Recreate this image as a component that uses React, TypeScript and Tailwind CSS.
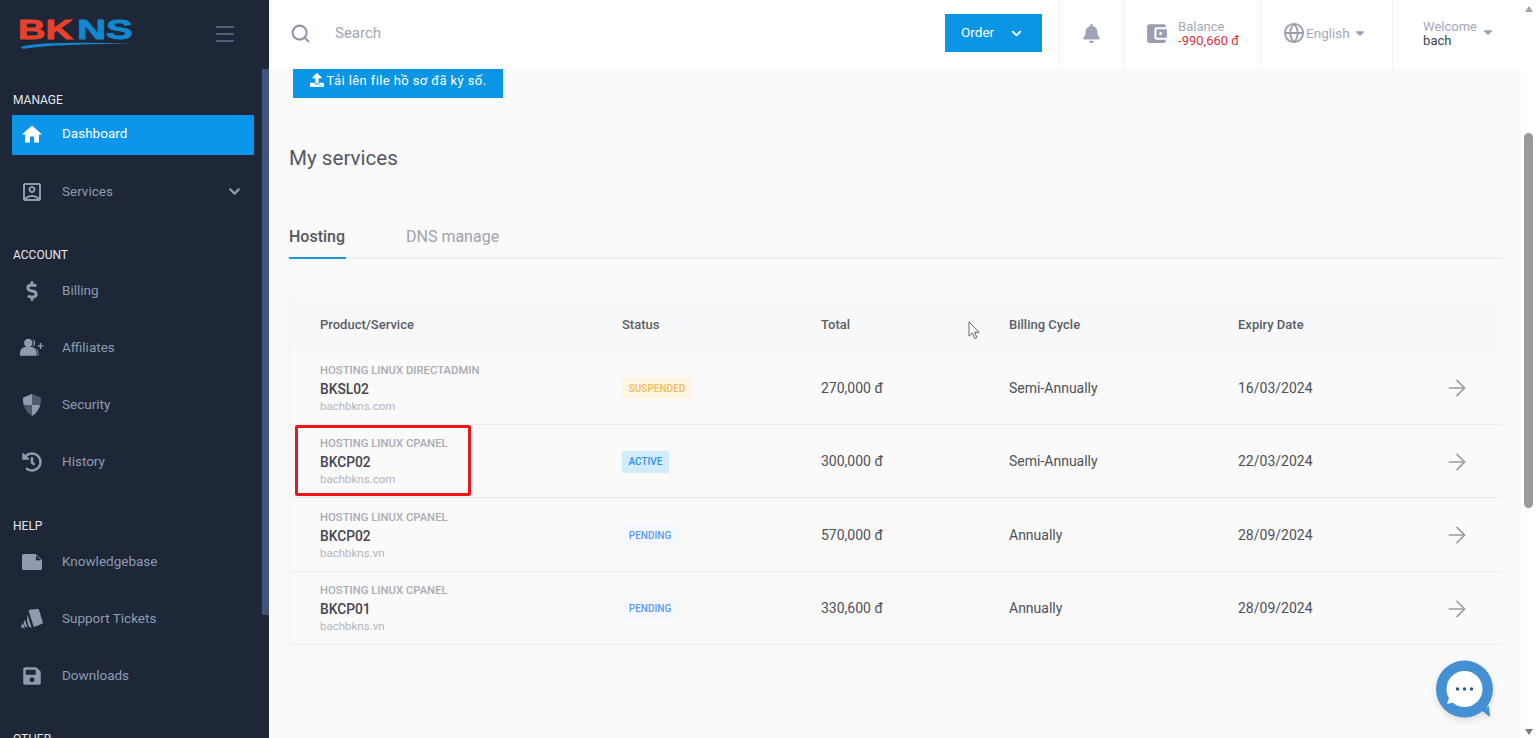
import React from "react";
import { FaDollarSign, FaHistory, FaBell, FaSave, FaCaretDown, FaUpload } from "react-icons/fa";
import { MdAccountBalanceWallet, MdHome, MdOutlineAccountBox } from "react-icons/md";
import { ChevronDown, Search, Menu, ArrowRight, Globe } from "lucide-react";

const font = { fontFamily: "Roboto, 'Noto Sans', sans-serif" };

function AffIcon() {
  return (
    <svg viewBox="0 0 26 20" className="w-[25px] h-[19px]" fill="currentColor">
      <circle cx="9" cy="5" r="4.6" />
      <path d="M0 19v-3c0-4 3-6.5 6-6.5h6c3 0 6 2.500 6 6.500v3z" />
      <path d="M13.500 1a4.500 4.500 0 0 1 0 8.500c1-1.200 1.500-2.600 1.500-4.200 0-1.700-.5-3.200-1.500-4.300z" />
      <path d="M16 10.500c2.500.5 4 2.500 4 5.500v3h-1v-4c0-1.800-1.200-3.400-3-4.500z" />
      <path d="M21.500 5h1.500v2.500h2.500V9H23v2.500h-1.500V9H19V7.500h2.500z" />
    </svg>
  );
}
function ShieldIcon() {
  return (
    <svg viewBox="0 0 18 22" className="w-[18px] h-[22px]" fill="currentColor">
      <path d="M9 0 L17 3.200 C18 3.600 18 4 18 5 C18 13 14 19 9 22 C4 19 0 13 0 5 C0 4 0 3.600 1 3.200Z" opacity="0.45" />
      <path d="M9 0 L1 3.200 C0 3.600 0 4 0 5 C0 7 .2 9 .8 11H9z" />
      <path d="M9 11H17.200C16 15.500 13 19.600 9 22z" />
    </svg>
  );
}
function NoteIcon() {
  return (
    <svg viewBox="0 0 20 16" className="w-[20px] h-[16px]">
      <path fill="currentColor" d="M1.500 0H13.500L20 6V14.500a1.500 1.500 0 0 1-1.500 1.500h-17A1.500 1.500 0 0 1 0 14.500v-13A1.500 1.500 0 0 1 1.500 0z" />
      <path fill="#1d2738" d="M14 1.500V6.200H19.200z" />
    </svg>
  );
}
function TicketIcon() {
  return (
    <svg viewBox="0 0 22 20" className="w-[22px] h-[20px]" fill="currentColor">
      <path d="M9.500.6 16.800 0c.6 0 1 .2 1.200.7l3.800 12.600c.2.600-.1 1.200-.7 1.400l-7.300 3c-.6.200-1.200 0-1.400-.6L7.800 2.300c-.3-.8.800-1.600 1.700-1.700z" />
      <path d="M6.500 5.500 10 17l.8 2-3-1.600-1.800-5.400zM3.900 10.500 6.500 18.500 4 17.500 2.700 14.200zM1.900 14l2 5.500L.8 18.500c-.6-.3-.9-.8-.6-1.400z" />
    </svg>
  );
}

const NavRow = ({ icon, label, chevron }: { icon: React.ReactNode; label: string; chevron?: boolean }) => (
  <div className="h-[57px] flex items-center pl-[20px] pr-[26px] text-[#8f9bb0]">
    <div className="w-[24px] flex justify-center shrink-0">{icon}</div>
    <span className="ml-[18px] text-[13.5px] flex-1">{label}</span>
    {chevron && <ChevronDown size={17} strokeWidth={3} />}
  </div>
);

const SectionTitle = ({ children, className }: { children: React.ReactNode; className: string }) => (
  <div className={"h-[16px] pl-[13px] text-[12px] leading-[16px] text-[#e6e9ef] " + className}>{children}</div>
);

function Sidebar() {
  return (
    <aside className="w-[269px] h-[738px] shrink-0 bg-[#1d2738] flex flex-col overflow-hidden relative">
      <div className="h-[69px] shrink-0 flex items-start justify-between pl-[18px] pr-[32px]">
        <svg viewBox="0 -12 116 46" className="w-[116px] h-[46px] mt-[5px]">
          <text x="0" y="22" fontFamily="'Liberation Sans', sans-serif" fontWeight="900" fontSize="27" textLength="55" lengthAdjust="spacingAndGlyphs" fill="#e8412b" stroke="#e8412b" strokeWidth="0.8">BK</text>
          <text x="59" y="22" fontFamily="'Liberation Sans', sans-serif" fontWeight="900" fontSize="27" textLength="56" lengthAdjust="spacingAndGlyphs" fill="#1188d0" stroke="#1188d0" strokeWidth="0.8">NS</text>
          <path d="M3 30C14 25.500 60 24.500 116 27 70 26.500 30 28 8 31.500 5 32 3 31.500 3 30z" fill="#1188d0" />
        </svg>
        <Menu size={24} className="mt-[22px] text-[#4f6180]" strokeWidth={2} />
      </div>
      <SectionTitle className="mt-[23px]">MANAGE</SectionTitle>
      <div className="mt-[7px] mx-[12px] w-[242px] h-[40px] bg-[#0b96e9] flex items-center pl-[8px] text-white shrink-0">
        <div className="w-[24px] flex justify-center mb-[2px]"><MdHome size={25} /></div>
        <span className="ml-[18px] text-[13.5px] mb-[3px]">Dashboard</span>
      </div>
      <div className="mt-[8px] shrink-0">
        <NavRow icon={<MdOutlineAccountBox size={24} />} label="Services" chevron />
      </div>
      <SectionTitle className="mt-[27px]">ACCOUNT</SectionTitle>
      <div className="-mt-[1px] shrink-0">
        <NavRow icon={<FaDollarSign size={20} />} label="Billing" />
        <NavRow icon={<AffIcon />} label="Affiliates" />
        <NavRow icon={<ShieldIcon />} label="Security" />
        <NavRow icon={<FaHistory size={20} />} label="History" />
      </div>
      <SectionTitle className="mt-[28px]">HELP</SectionTitle>
      <div className="-mt-[1px] shrink-0">
        <NavRow icon={<NoteIcon />} label="Knowledgebase" />
        <NavRow icon={<TicketIcon />} label="Support Tickets" />
        <NavRow icon={<FaSave size={20} />} label="Downloads" />
      </div>
      <SectionTitle className="mt-[27px]">OTHER</SectionTitle>
      <div className="absolute left-[262px] top-[69px] w-[7px] h-[546px] bg-[#3f5478]" />
    </aside>
  );
}

const Divider = () => <div className="w-px h-[69px] bg-[#f1f2f4] shrink-0" />;

function Header() {
  return (
    <header className="h-[69px] shrink-0 bg-white flex items-center text-[#9ea3b5]">
      <Search size={21} strokeWidth={2.3} className="ml-[21px] mb-[2px] text-[#8e95a5]" />
      <span className="ml-[24px] mb-[2px] text-[15px] text-[#a2a6b4]">Search</span>
      <div className="ml-[564px] mb-[3px] w-[97px] h-[38px] bg-[#0b96e5] text-white flex items-center pl-[16px] text-[13.5px]">
        <span className="mb-[1px]">Order</span>
        <ChevronDown size={15} strokeWidth={3} className="ml-[15px]" />
      </div>
      <div className="ml-[16px]"><Divider /></div>
      <div className="w-[64px] flex justify-center mb-[3px]"><FaBell size={19} className="text-[#9ea3b5]" /></div>
      <Divider />
      <div className="w-[137px] flex items-center pl-[20px] mb-[2px]">
        <MdAccountBalanceWallet size={25} className="text-[#9a9eb0]" />
        <div className="ml-[9px] flex flex-col text-[13px] leading-[14px]">
          <span className="text-[#a5a9b8]">Balance</span>
          <span className="text-[#d9323f]">-990,660 đ</span>
        </div>
      </div>
      <Divider />
      <div className="w-[130px] flex items-center pl-[21px] mb-[3px]">
        <Globe size={22} strokeWidth={2} className="text-[#9a9eb0]" />
        <span className="ml-[1px] text-[13.5px] text-[#a5a9b8]">English</span>
        <FaCaretDown size={14} className="ml-[3px] text-[#9a9eb0]" />
      </div>
      <Divider />
      <div className="flex-1 flex items-center pl-[30px] mb-[2px]">
        <div className="flex flex-col text-[13px] leading-[14px]">
          <span className="text-[#a5a9b8]">Welcome</span>
          <span className="text-[#3c3f4a]">bach</span>
        </div>
        <FaCaretDown size={14} className="ml-[4px] mb-[3px] text-[#9a9eb0]" />
      </div>
    </header>
  );
}

const badgeStyles: Record<string, string> = {
  SUSPENDED: "bg-[#fff5e2] text-[#f5bb5c] w-[70px]",
  ACTIVE: "bg-[#d3ecfb] text-[#2f94dc] w-[47px]",
  PENDING: "bg-[#f4f7fd] text-[#5b9bea] w-[56px]",
};

const rows = [
  { cat: "HOSTING LINUX DIRECTADMIN", name: "BKSL02", domain: "bachbkns.com", status: "SUSPENDED", total: "270,000 đ", cycle: "Semi-Annually", exp: "16/03/2024", h: "h-[74px]" },
  { cat: "HOSTING LINUX CPANEL", name: "BKCP02", domain: "bachbkns.com", status: "ACTIVE", total: "300,000 đ", cycle: "Semi-Annually", exp: "22/03/2024", h: "h-[73px]", mark: true },
  { cat: "HOSTING LINUX CPANEL", name: "BKCP02", domain: "bachbkns.vn", status: "PENDING", total: "570,000 đ", cycle: "Annually", exp: "28/09/2024", h: "h-[74px]" },
  { cat: "HOSTING LINUX CPANEL", name: "BKCP01", domain: "bachbkns.vn", status: "PENDING", total: "330,600 đ", cycle: "Annually", exp: "28/09/2024", h: "h-[73px]" },
];

const gridCols = "grid grid-cols-[302px_199px_188px_229px_209px_1fr] items-center pl-[30px]";

function Table() {
  return (
    <div className="mt-[39px] ml-[20px] w-[1212px] border-l border-[#f0f1f3]">
      <div className={gridCols + " h-[53px] bg-[#f7f8f9] text-[13px] font-medium text-[#5a5d68]"}>
        <span>Product/Service</span>
        <span>Status</span>
        <span>Total</span>
        <span>Billing Cycle</span>
        <span>Expiry Date</span>
        <span />
      </div>
      {rows.map((r) => (
        <div key={r.cat + r.name + r.domain} className={gridCols + " relative pt-[1px] border-b border-[#ebecee] " + r.h}>
          <div className="flex flex-col">
            <span className="text-[11.3px] leading-[16px] font-medium text-[#a9abb3]">{r.cat}</span>
            <span className="text-[13.8px] leading-[20px] font-medium text-[#44464e]">{r.name}</span>
            <span className="text-[11.5px] leading-[15px] text-[#b3b5bd]">{r.domain}</span>
          </div>
          <span className={"h-[22px] flex items-center justify-center text-[10px] font-medium " + badgeStyles[r.status]}>{r.status}</span>
          <span className="text-[14px] text-[#4e5058]">{r.total}</span>
          <span className="text-[14px] text-[#4e5058]">{r.cycle}</span>
          <span className="text-[14px] text-[#4e5058]">{r.exp}</span>
          <ArrowRight size={26} strokeWidth={1.6} className="-ml-[3px] text-[#9a9da8]" />
          {r.mark && <div className="absolute left-[5px] top-0 w-[176px] h-[71px] border-[3px] border-[#f0141a] rounded-[2px]" />}
        </div>
      ))}
    </div>
  );
}

function Scrollbar() {
  return (
    <div className="w-[15px] shrink-0 h-[738px] bg-white flex flex-col items-center">
      <div className="mt-[6px] w-0 h-0 border-x-[4px] border-x-transparent border-b-[6px] border-b-[#a3a3a3]" />
      <div className="mt-[121px] w-[9px] h-[375px] rounded-full bg-[#9a9a9a]" />
      <div className="mt-[221px] w-0 h-0 border-x-[4px] border-x-transparent border-t-[6px] border-t-[#7c7c7c]" />
    </div>
  );
}

function ChatIcon() {
  return (
    <svg viewBox="0 0 60 60" className="absolute left-[1435px] top-[660px] w-[60px] h-[60px] drop-shadow-md">
      <circle cx="29.500" cy="29" r="28.500" fill="#458fd3" />
      <path d="M46 50 L54 46 L55 57 Z" fill="#458fd3" />
      <circle cx="29.500" cy="29" r="18" fill="#fff" />
      <path d="M14 38 L12 44 L20 42 Z" fill="#fff" />
      <circle cx="22.500" cy="29" r="1.700" fill="#23588c" />
      <circle cx="29.500" cy="29" r="1.700" fill="#23588c" />
      <circle cx="36.500" cy="29" r="1.700" fill="#23588c" />
    </svg>
  );
}

export default function App() {
  return (
    <div className="w-[1536px] h-[738px] flex overflow-hidden bg-[#fafafb] relative" style={font}>
      <Sidebar />
      <div className="flex-1 flex flex-col min-w-0 h-[738px]">
        <Header />
        <main className="flex-1 overflow-hidden">
          <div className="ml-[24px] w-[210px] h-[29px] bg-[#0b96e5] text-white text-[13px] tracking-[0.4px] flex items-start justify-center pt-[2px] gap-[3px]">
            <FaUpload size={14} className="mt-[2px]" />
            Tải lên file hồ sơ đã ký số.
          </div>
          <h2 className="ml-[20px] mt-[45px] text-[20.6px] leading-[30px] text-[#55575f]">My services</h2>
          <div className="ml-[20px] mt-[51px] w-[1213px] h-[35px] border-b-2 border-[#eff0f2] flex items-start text-[16px] leading-[24px]">
            <div className="h-[35px] w-[57px] pt-[1px] border-b-2 border-[#1d93de] font-medium text-[#55575f]">Hosting</div>
            <div className="ml-[60px] pt-[1px] text-[#a0a3ad]">DNS manage</div>
          </div>
          <Table />
        </main>
      </div>
      <Scrollbar />
      <svg viewBox="0 0 14 22" className="absolute left-[968px] top-[321px] w-[13px] h-[20px]" fill="#fff" stroke="#555" strokeWidth="1">
        <path d="M1 1v15.500l3.700-3.300 2.500 6 2.400-1-2.500-5.800h5z" />
      </svg>
      <ChatIcon />
    </div>
  );
}
